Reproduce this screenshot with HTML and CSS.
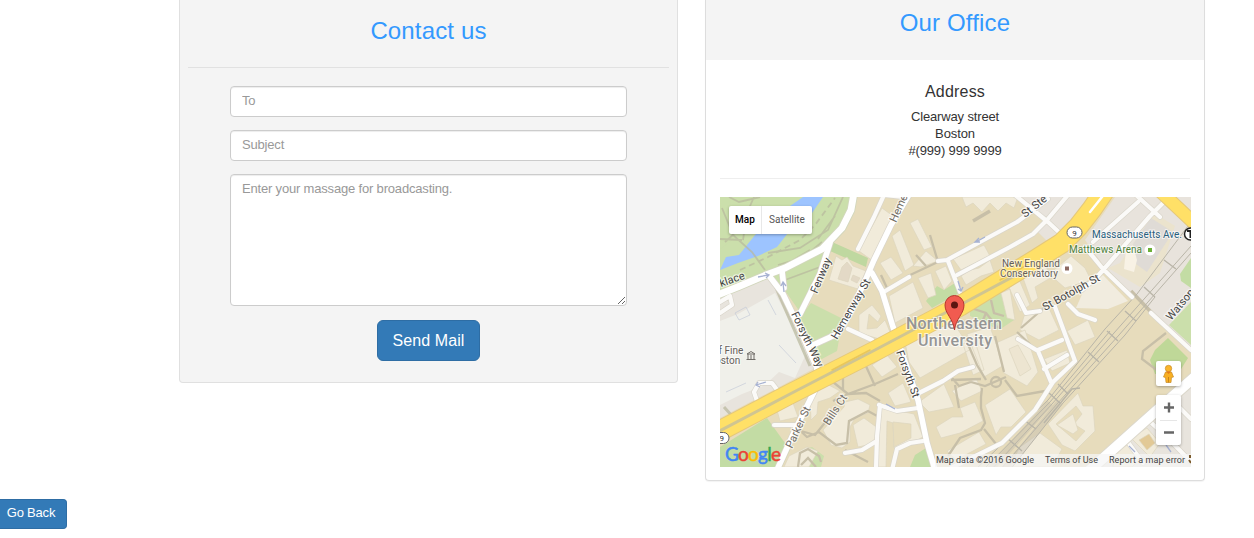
FILE: index.html
```html
<!DOCTYPE html>
<html lang="en">
<head>
<meta charset="utf-8">
<title>Contact us</title>
<link rel="stylesheet" href="styles.css">
</head>
<body>
<main class="columns">
  <section class="panel contact">
    <h3 class="title">Contact us</h3>
    <hr class="rule">
    <form class="form">
      <input class="field" type="text" placeholder="To">
      <input class="field" type="text" placeholder="Subject">
      <textarea class="field message" placeholder="Enter your massage for broadcasting."></textarea>
      <button class="btn btn-large" type="button">Send Mail</button>
    </form>
  </section>
  <section class="panel office">
    <header class="office-head"><h3 class="title">Our Office</h3></header>
    <div class="office-body">
      <h4 class="subtitle">Address</h4>
      <address class="address"><span class="street">Clearway street</span><br>Boston<br><span class="phone">#(999) 999 9999</span></address>
      <hr class="rule office-rule">
      <div class="map">
        <svg class="map-canvas" viewBox="720 197 471 270" width="471" height="270">
          <defs>
            <g id="main-streets">
              <path d="M770 277L783 294 798 325 817 368 815 390 796 428 777 470M830 243L820 274 800 314M782 271L784 288M910 193L891 225 874 260 865 281 848 317 837 334 813 345M872 273L882 291 893 327 904 359 918 400 927 443 935 470"/>
            </g>
            <g id="side-streets">
              <path d="M882 293L909 277M938 261L947 260 980 242 1017 222 1048 199M948 261L960 292M957 275L1010 247 1033 234 1047 220 1068 195M1015 195L1048 222 1062 235M1085 247L1103 269 1132 297M1151 313L1191 350M1136 195L1160 217M1170 196L1150 216 1097 277 1082 290M1138 202L1093 242M858 249L874 217 884 195 903 197M720 302L730 296 732 305 720 313M757 401L754 392 759 383 772 383 778 391M774 425L795 425M919 393L943 381 958 371 973 367M879 405L897 411 918 408M892 470L897 449 910 443 923 441M876 470L877 437 880 405M845 453L862 450 875 442M848 329L872 340M951 468L1002 443 1035 410 1053 382 1075 361 1055 307M1018 339L1038 351 1051 382M1038 350L1062 340M1044 369L1067 355M1017 295L1026 313 1040 311M1068 304L1078 314 1095 320M1146 418L1168 438 1191 462M1125 438L1143 463M1174 402L1191 419"/>
            </g>
          </defs>
          <rect x="720" y="197" width="471" height="270" fill="#e7dcbc"/>
          <!-- parks and blocks -->
          <path d="M720 197H853L850 213 842 228 822 249 785 268 720 292Z" fill="#cbdfab"/>
          <path d="M823 197H803L780 213 755 235 739 255 726 257 720 270 738 263 758 256 777 247 795 224 810 216Z" fill="#9dc4ff"/>
          <path d="M720 294L768 278 785 300 815 368 720 418Z" fill="#e8e4dd"/>
          <path d="M738 314L775 293 792 325 806 354 795 378 779 372 765 385 742 394 720 405V321Z" fill="#f0f0ea"/>
          <path d="M773 277L785 268 828 248 820 272 800 312 786 292Z" fill="#cbdfab"/>
          <path d="M832 242L868 258 866 267 830 251Z" fill="#bfd8a0"/>
          <path d="M811 303L847 321 840 334 837 351 820 360 800 317Z" fill="#cbdfab"/>
          <path d="M720 447L767 418 790 450 782 467H720Z" fill="#c3dca4"/>
          <path d="M801 450L812 447 824 456 821 467H797L799 454Z" fill="#cbdfab"/>
          <path d="M910 467L915 455 926 448 931 467Z" fill="#c3dca4"/>
          <path d="M926 301L937 286 944 290 955 283 961 292 932 308Z" fill="#c3dca4"/>
          <path d="M970 309L1000 292 1014 320 999 330 970 316Z" fill="#cbdfab"/>
          <path d="M720 197H730L733 239 720 249Z" fill="#cbdfab" opacity=".5"/>
          <path d="M1020 197H1100L1068 226 1050 244 1036 230 1047 220Z" fill="#e8e3dc"/>
          <path d="M1115 197H1191V348L1150 310 1135 297 1103 265 1085 240Z" fill="#e8e3dc"/>
          <path d="M1120 263L1154 213 1175 226 1160 273 1140 287 1108 268Z" fill="#ebe3cd"/>
          <path d="M1125 256L1151 218 1173 232 1147 272Z" fill="#dfdbd6"/>
          <path d="M1126 249L1133 245 1137 260 1134 272 1124 269Z" fill="#f8f2e5"/>
          <path d="M1103 275L1128 301 1108 309 1076 308 1083 292Z" fill="#f1ecdf"/>
          <path d="M1180 274L1191 258V288L1181 281Z" fill="#c3dca4"/>
          <path d="M1169 325L1191 302V345Z" fill="#cbdfab"/>
          <path d="M1168 338L1188 358 1178 374H1155L1150 360 1155 350Z" fill="#bfd898"/>
          <path d="M1191 384L1150 418 1100 467H1191Z" fill="#e8e4dd"/>
          <!-- park paths -->
          <g fill="none" stroke="#b9b99e" stroke-width="1.800" opacity=".72">
            <path d="M722 208L733 235 752 252 765 270M754 197L747 213 743 240M720 239L742 240M729 197L739 202 760 197M768 253L800 248 828 230 843 197M778 265L804 257 822 242M785 280L820 267M725 242L734 234M785 265L810 250M818 239L835 216"/>
            <path d="M740 270L768 257 800 240 815 225 835 198" stroke-dasharray="6 4"/>
            <path d="M773 281L810 366M724 407L733 417" stroke-width="3"/>
          </g>
          <!-- buildings -->
          <g fill="#f1ebda" stroke="#ddd5bf" stroke-width=".7">
            <path d="M735 313L739 320 750 315 746 307ZM768 300L776 315M726 392L746 383M779 345L796 363" fill="none" stroke="#c5cbd8"/>
            <path d="M836 256L842 260 847 257 853 266 866 271 858 289 829 280Z"/><path d="M842 267L847 262 852 268 848 282 838 279ZM853 275L860 278 857 283 851 280Z" fill="#e3d9c6"/>
            <path d="M859 251L882 208 893 216 873 261ZM866 271L872 260 875 271Z"/>
            <path d="M880 263L891 257 903 273 891 280ZM892 236L900 230 914 265 905 271ZM910 223L918 219 932 247 924 250ZM913 266L926 251 938 261 921 267Z"/>
            <path d="M889 296L913 282 923 308 895 323ZM918 278L931 273 936 295 928 298ZM935 271L946 266 952 281 944 290Z"/>
            <path d="M859 333L859 315 872 305 881 316 878 322 869 314 867 329 877 328 885 320 890 332 883 340Z"/>
            <path d="M953 259L984 245 990 256 961 270ZM961 276L970 270 979 268 990 260 994 272 981 276 966 285Z"/>
            <path d="M962 197H1018L1014 208 1006 203 998 211 990 203 982 212 973 203 966 207Z"/>
            <path d="M1007 283L1018 277 1030 305 1020 312ZM1001 293L1010 289 1015 320 1007 318Z"/>
            <path d="M1023 278L1045 265 1052 277 1035 287 1038 298 1032 303ZM1049 274L1071 256 1085 268 1091 280 1065 288ZM1024 316L1048 306 1059 330 1039 340 1020 330ZM1067 331L1088 320 1095 337 1075 345Z"/>
            <path d="M1044 359L1067 350 1070 363 1052 371Z"/>
            <path d="M903 332L948 315 971 349 920 378 909 362ZM967 334L990 327 1004 365 984 377ZM963 344L974 338 984 370 973 375Z"/>
            <path d="M872 365L887 355 897 367 882 377ZM888 393L903 383 911 402 895 406ZM919 402L944 384 954 407 929 412ZM952 391L976 378 982 391 961 401Z"/>
            <path d="M880 407L914 414 923 437 908 445 894 448 893 423 887 421 886 467H877Z"/><path d="M893 422L911 424V438L894 447Z" fill="#e8ddbd"/>
            <path d="M936 427L952 417 963 417 960 408 975 402 983 421 960 433 941 438ZM947 451L979 432 986 444 956 460ZM985 405L1010 389 1026 412 1011 427 1001 427 996 435Z"/>
            <path d="M996 343L1025 330 1038 372 1027 386 1004 373Z"/><path d="M1009 349L1018 345 1031 369 1020 376Z" fill="#ede5d1"/>
            <path d="M1048 424L1078 393 1083 406 1093 406 1095 431 1075 451 1062 445Z"/><path d="M1056 424L1076 406 1082 414 1074 424 1085 431 1076 441Z" fill="#e7dcbc"/><path d="M1057 425L1073 414 1078 430 1073 434Z"/>
            <path d="M810 399L825 383 840 391 830 398 818 402 817 414 811 420ZM823 430L844 407 845 402 858 399 870 405 868 413 855 418 850 427 850 442 842 448 831 445Z"/>
            <path d="M853 425L864 418 879 429 872 444 858 447ZM1020 447L1040 433 1062 449 1052 467H1009ZM789 456L807 447 818 451 809 467H784Z"/>
            <path d="M1131 438L1147 428 1160 443 1150 457ZM1114 452L1127 445 1140 459 1132 467H1113Z"/>
            <path d="M1139 440L1149 434 1155 443 1147 450Z" fill="#e2c996"/><path d="M777 410L793 403 798 417 780 421Z"/>
          </g>
          <!-- campus paths -->
          <g fill="none" stroke="#c7bfa8" stroke-width="2.300">
            <path d="M843 359L843 390M833 382L848 394 866 393 880 401M833 401L848 394 875 384 898 374M865 364L875 386M801 431L815 435 832 414M794 425L807 437 819 432 836 445 847 443 849 421 868 411 879 417M845 450L868 462"/>
            <path d="M887 288L881 275M908 276L938 262 930 235M916 255L926 266M971 308L986 313 998 328M991 300L994 313 1004 316M986 313L983 320M967 342L977 365 986 380M955 385L959 408"/>
            <path d="M951 380L981 379M952 378L959 386 971 382M971 382L985 386 1006 377M1005 380L1017 396 1045 391M982 388L981 397 981 408 985 423 981 430 960 438 948 456M984 429L996 444M1017 332L1033 347M1045 307L1021 328M995 336L1004 372"/>
            <path d="M1166 333L1143 351 1142 359 1158 371"/><path d="M1131 291L1152 313M973 221L990 211" stroke-width="3.500"/>
            <circle cx="996" cy="382" r="5"/><path d="M798 467L800 453 808 449 819 456 821 462M801 465L808 458 816 467"/>
          </g>
          <!-- railway -->
          <g fill="none" stroke="#b9b5a8">
            <path d="M990 470L1050 403M1005 470L1060 402" stroke-width="7" opacity=".35"/>
            <path d="M975 470L1048 400 1105 329 1137 294 1191 222M991 470L1052 404 1114 333 1191 246M1000 470L1057 404 1119 335 1191 253M1010 470L1063 403 1125 335 1155 297M983 470L1050 402 1110 331" stroke-width="1"/>
            <path d="M1044 423L1072 389 1080 388M1049 393L1060 403M1058 384L1068 394M1088 352L1099 362M1107 331L1118 341M1125 311L1136 321M1144 287L1155 297M1164 260L1176 269M1024 420L1036 429M1007 438L1022 451" stroke-width="1.400"/>
          </g>
          <!-- streets: casing, then surface -->
          <g fill="none" stroke-linejoin="round" stroke-linecap="round">
            <g stroke="#d9d5ca"><use href="#side-streets" stroke-width="5.500"/><use href="#main-streets" stroke-width="7"/></g>
            <path d="M715 296L740 286 766 275 785 268 822 249 842 228 851 210 854 193" stroke="#d2d7bd" stroke-width="8.500"/>
            <path d="M715 296L740 286 766 275 785 268 822 249 842 228 851 210 854 193" stroke="#fff" stroke-width="6.800"/>
            <use href="#side-streets" stroke="#fbfaf8" stroke-width="4.200"/><use href="#main-streets" stroke="#fff" stroke-width="5.600"/>
            <path d="M1090 470L1155 412 1198 374" stroke="#dcd8cc" stroke-width="12"/><path d="M1090 470L1155 412 1198 374" stroke="#fff" stroke-width="10"/>
            <!-- Huntington Avenue -->
            <path d="M712 435L790 394 875 351 960 306 1035 260 1062 243 1078 227 1092 209 1105 190" stroke="#e5c87a" stroke-width="21"/>
            <path d="M712 435L790 394 875 351 960 306 1035 260 1062 243 1078 227 1092 209 1105 190" stroke="#ffe067" stroke-width="19"/>
            <path d="M712 435L790 394 875 350 960 305 1020 273" stroke="#d0c591" stroke-width="3"/>
            <path d="M832 370L870 350M1000 280L1027 265" stroke="#e9c65a" stroke-width="1.500"/>
            <path d="M1090 212L1106 192" stroke="#fff" stroke-width="2.500"/>
            <path d="M1159 190L1195 224" stroke="#e5c87a" stroke-width="14"/><path d="M1159 190L1195 224" stroke="#ffe067" stroke-width="12"/>
          </g>
          <!-- one-way arrows -->
          <g fill="none" stroke="#a7b2d2" stroke-width="1.300"><path d="M758 277L768 275M765 273L769 275 766 278M784 292L783 283M781 286L783 282 786 286M756 385L766 382M758 382L756 385 760 387M976 242L985 237M979 238L975 242 980 242M958 281L961 291M958 289L961 291 963 287M886 404L895 409M1129 446L1135 452M1166 445L1171 452"/></g>
          <!-- street and place labels -->
          <g class="label">
            <text transform="translate(721 287) rotate(-19)">klace</text>
            <text transform="translate(817 294) rotate(-67)">Fenway</text>
            <text transform="translate(837 340) rotate(-60)">Hemenway St</text>
            <text transform="translate(896 223) rotate(-66)" fill="#706b63">Heme</text>
            <text transform="translate(791 314) rotate(64)">Forsyth Way</text>
            <text transform="translate(896 352) rotate(70)">Forsyth St</text>
            <text transform="translate(792 449) rotate(-65)" fill="#706b63">Parker St</text>
            <text transform="translate(829 426) rotate(-57)" fill="#706b63">Bills Ct</text>
            <text transform="translate(1025 218) rotate(-38)">St Ste</text>
            <text transform="translate(1045 311) rotate(-29)">St Botolph St</text>
            <text transform="translate(1171 321) rotate(-50)">Watson</text>
          </g>
          <g class="place">
            <text x="718.500" y="354">f Fine</text><text x="715" y="364">oston</text>
            <text x="1031" y="267" text-anchor="middle" textLength="58">New England</text>
            <text x="1029" y="277" text-anchor="middle" textLength="58">Conservatory</text>
            <text x="1092" y="238" textLength="90" fill="#29607d">Massachusetts Ave.</text>
            <text x="1069" y="253" textLength="73" fill="#4e813a">Matthews Arena</text>
          </g>
          <g class="campus-name"><text x="906" y="329" textLength="96">Northeastern</text><text x="918" y="345.500" textLength="74">University</text></g>
          <g fill="#fff"><circle cx="1067" cy="268.500" r="5.500"/><circle cx="1150" cy="250" r="5.500"/></g>
          <path d="M1065 266.500h4v4h-4z" fill="#8d6a62"/><path d="M1148 248h4v4h-4z" fill="#6caf37"/>
          <path d="M747 354L751 351.500 755 354ZM748 354V359M754 354V359M746.500 359.500H755.500M751 355V359" fill="none" stroke="#706d68"/>
          <g fill="#fff" stroke="#666"><rect x="1067" y="227" width="15" height="11" rx="5.500"/><rect x="714" y="432.500" width="15" height="11" rx="5.500"/></g>
          <g class="shield"><text x="1072.300" y="235.500">9</text><text x="719.500" y="441">9</text></g>
          <circle cx="1190.500" cy="234" r="6" fill="#fff" stroke="#222" stroke-width="1.500"/><path d="M1187 231H1194M1190.500 231V238" stroke="#222" stroke-width="2"/>
          <!-- attribution strip -->
          <rect x="935" y="454" width="256" height="13" fill="#f5f5f5" opacity=".72"/>
          <g class="credit"><text x="936" y="463" textLength="98">Map data ©2016 Google</text><text x="1045" y="463" textLength="53">Terms of Use</text><text x="1109" y="463" textLength="76">Report a map error</text></g>
          <path d="M1190 455V458M1189 460L1191 463" stroke="#7b5a2b" stroke-width="2"/>
          <text class="logo" x="725" y="461" textLength="56"><tspan fill="#4285f4" stroke="#4285f4">G</tspan><tspan fill="#ea4335" stroke="#ea4335">o</tspan><tspan fill="#fbbc05" stroke="#fbbc05">o</tspan><tspan fill="#4285f4" stroke="#4285f4">g</tspan><tspan fill="#34a853" stroke="#34a853">l</tspan><tspan fill="#ea4335" stroke="#ea4335">e</tspan></text>
          <!-- marker -->
          <path d="M954.500 330C953 318 945 314 945 305A9.500 9.500 0 0 1 964 305C964 314 956 318 954.500 330Z" fill="#f15b50" stroke="#b6362d"/><circle cx="954.500" cy="305" r="3.500" fill="#5c1510"/>
        </svg>
        <div class="map-types"><span class="map-type active">Map</span><span class="map-type">Satellite</span></div>
        <div class="map-controls">
          <div class="control pegman"><svg width="13" height="20" viewBox="0 0 13 20"><circle cx="6.500" cy="4.500" r="3.200" fill="#fbb52a" stroke="#c58b2a" stroke-width=".7"/><path d="M3.500 8H9.500L11.500 13 9.500 13.500 9 18.500H4L3.500 13.500 1.500 13Z" fill="#f8af22" stroke="#c58b2a" stroke-width=".7"/><path d="M4 7.500H9L6.500 10Z" fill="#e67a17"/><path d="M6.500 13V18.500" stroke="#c98519"/></svg></div>
          <div class="control zoomer"><svg width="25" height="50" viewBox="0 0 25 50"><path d="M8 12.500H18M13 7.500V17.500M8 37.500H18" stroke="#666" stroke-width="2.400"/><path d="M4 25.500H21" stroke="#e6e6e6"/></svg></div>
        </div>
      </div>
    </div>
  </section>
</main>
<button class="btn back" type="button">Go Back</button>
</body>
</html>
```
FILE: styles.css
```css
* { box-sizing: border-box; }
body { margin: 0; height: 538px; overflow: hidden; background: #fff; color: #333; font: 13px/17px "Liberation Sans", Arial, sans-serif; }
.columns { display: grid; grid-template-columns: 499px 500px; column-gap: 27px; align-items: start; height: 499px; padding-left: 179px; }
.panel { border: 1px solid #ddd; border-top: 0; border-radius: 0 0 4px 4px; }
.contact { height: 383px; padding: 17px 8px 0; background: #f4f4f4; border-color: #e0e0e0; }
.title { margin: 0; color: #3399ff; font-size: 24px; line-height: 27px; font-weight: 400; letter-spacing: .15px; text-align: center; }
.rule { height: 1px; margin: 23px 0 18px; border: 0; background: #e1e1e1; }
.form { display: flex; flex-direction: column; align-items: center; }
.field { display: block; width: 397px; height: 31px; margin: 0 0 13px; padding: 4px 11px 7px; border: 1px solid #ccc; border-radius: 4px; background: #fff; box-shadow: inset 0 1px 1px rgba(0,0,0,.075); font: 13px/18px "Liberation Sans", Arial, sans-serif; letter-spacing: -.18px; }
.field::placeholder { color: #999; opacity: 1; }
.message { height: 132px; margin-bottom: 14px; padding-top: 5px; resize: vertical; }
.btn { border: 1px solid #2e6da4; border-radius: 4px; background: #337ab7; color: #fff; font: 13px/18px "Liberation Sans", Arial, sans-serif; letter-spacing: -.2px; text-align: center; white-space: nowrap; }
.btn-large { width: 103px; height: 41px; padding: 0; border-radius: 6px; font-size: 16px; letter-spacing: .1px; }
.back { display: block; width: 67px; height: 30px; padding: 0 4px 3px 0; border-left: 0; border-radius: 0 4px 4px 0; }
.office { height: 481px; box-shadow: 0 1px 1px rgba(0,0,0,.05); }
.office-head { height: 60px; padding-top: 9px; background: #f4f4f4; }
.office-body { padding: 23px 14px 0; text-align: center; }
.subtitle { margin: 0 0 7px; font-size: 16px; line-height: 18px; font-weight: 400; letter-spacing: .2px; }
.address { font-style: normal; letter-spacing: -.1px; }
.street, .phone { letter-spacing: -.15px; }
.office-rule { margin: 19px 0 18px; background: #eee; }
.map { position: relative; width: 471px; height: 270px; overflow: hidden; text-align: left; }
.map-canvas { display: block; }
.label { font: 11px Roboto, sans-serif; fill: #444; stroke: #fff; stroke-width: 2.5px; stroke-opacity: .6; paint-order: stroke; }
.place { font: 10px Roboto, sans-serif; fill: #665f5a; stroke: #fff; stroke-width: 2px; stroke-opacity: .6; paint-order: stroke; }
.campus-name { font: 500 16px Roboto, sans-serif; fill: #959595; stroke: #fff; stroke-width: 2px; stroke-opacity: .7; paint-order: stroke; }
.shield { font: 8px Roboto, sans-serif; fill: #333; }
.credit { font: 9px Roboto, sans-serif; fill: #444; }
.logo { font: 400 19px Lato, sans-serif; stroke-width: .5px; }
.map-types { position: absolute; top: 9px; left: 9px; display: flex; height: 28px; border-radius: 2px; background: #fff; box-shadow: 0 1px 3px rgba(0,0,0,.3); font: 10px/28px Roboto, sans-serif; }
.map-type { width: 50px; color: #565656; text-align: center; }
.map-type.active { width: 33px; border-right: 1px solid #e8e8e8; color: #000; font-weight: 500; }
.map-controls { position: absolute; right: 10px; bottom: 22px; display: grid; gap: 9px; }
.control { width: 25px; border-radius: 2px; background: #fff; box-shadow: 0 1px 3px rgba(0,0,0,.3); }
.control svg { display: block; }
.pegman { display: flex; align-items: center; justify-content: center; height: 25px; }
```
